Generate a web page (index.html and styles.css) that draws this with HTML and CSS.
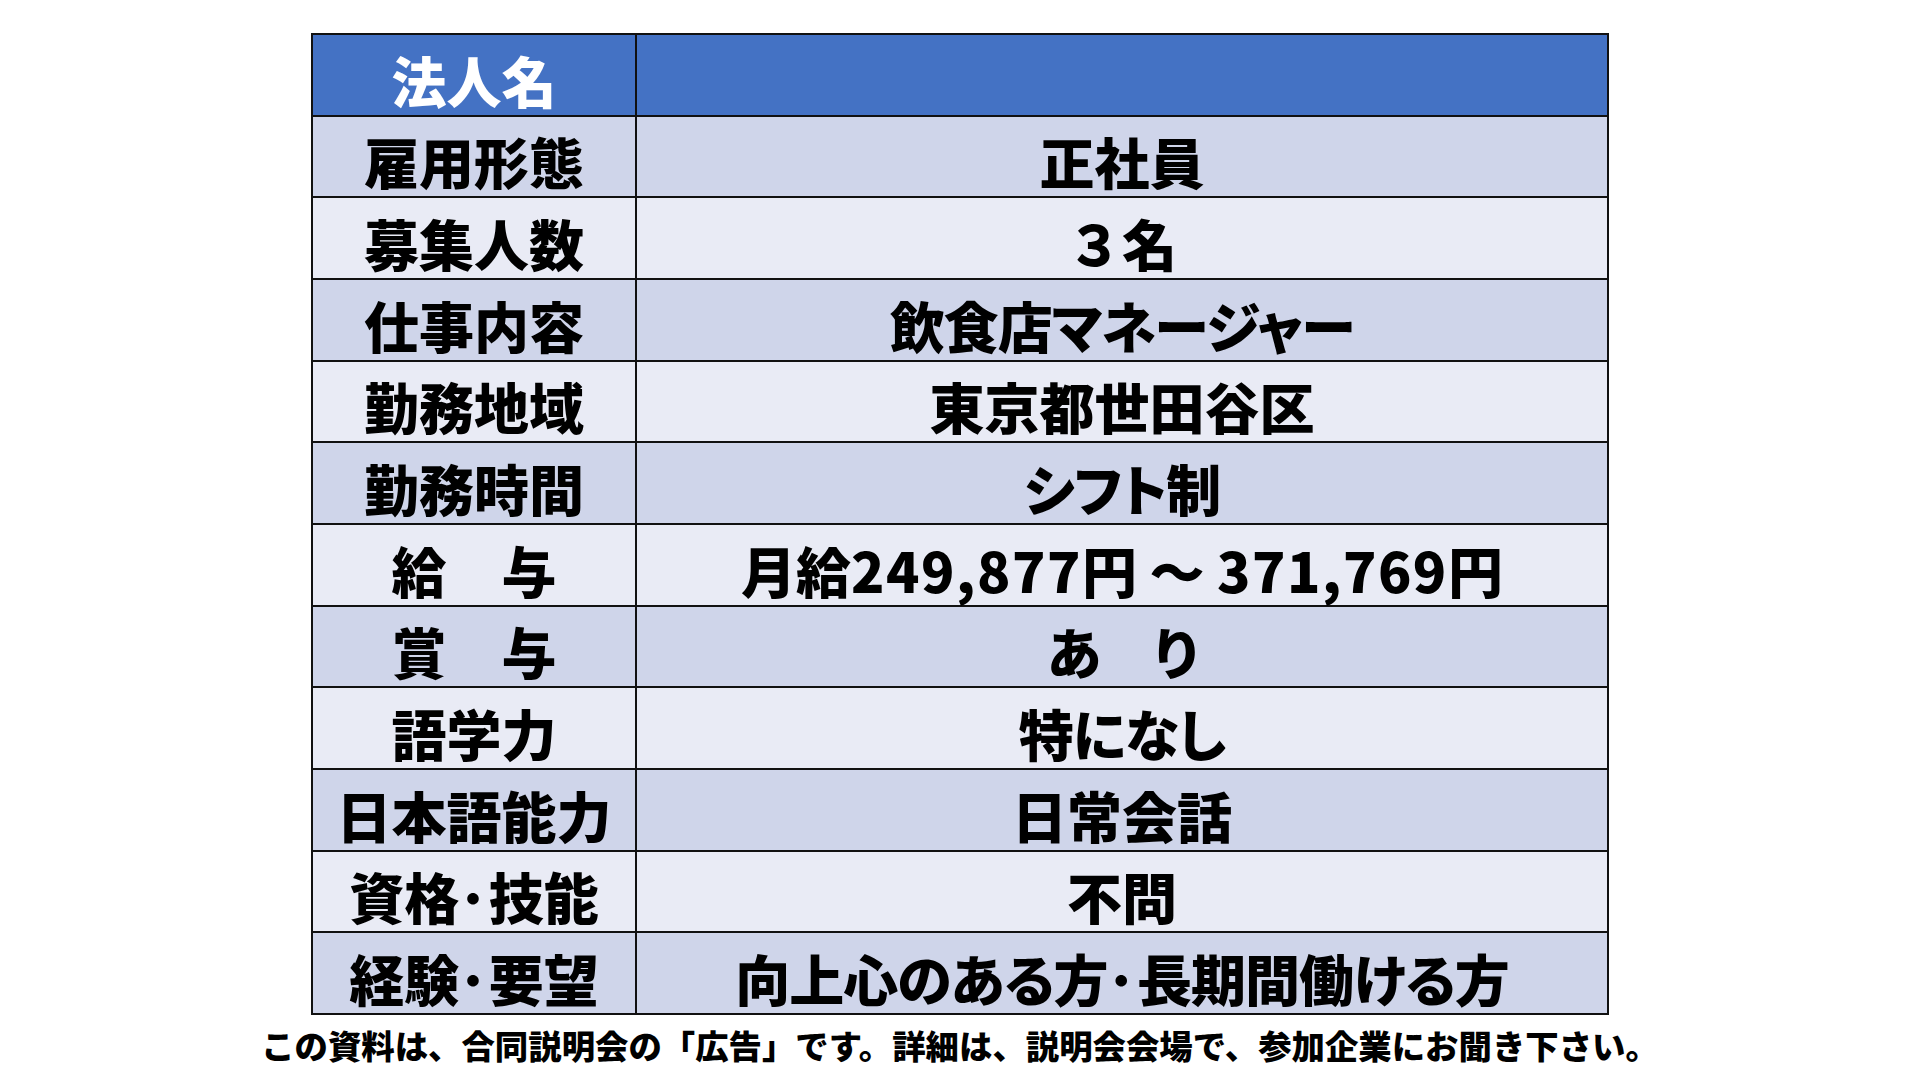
FILE: index.html
```html
<!DOCTYPE html>
<html lang="ja">
<head>
<meta charset="utf-8">
<title>求人情報</title>
<link rel="stylesheet" href="styles.css">
</head>
<body>
<main class="page">
  <table class="job">
    <tr class="head"><td class="label">法人名</td><td class="value"></td></tr>
    <tr class="dark"><td class="label">雇用形態</td><td class="value">正社員</td></tr>
    <tr class="light"><td class="label">募集人数</td><td class="value">３名</td></tr>
    <tr class="dark"><td class="label">仕事内容</td><td class="value prop">飲食店マネージャー</td></tr>
    <tr class="light"><td class="label">勤務地域</td><td class="value">東京都世田谷区</td></tr>
    <tr class="dark"><td class="label">勤務時間</td><td class="value prop">シフト制</td></tr>
    <tr class="light"><td class="label">給　与</td><td class="value">月給<span class="num">249,877</span>円 ～ <span class="num">371,769</span>円</td></tr>
    <tr class="dark"><td class="label">賞　与</td><td class="value prop">あ　り</td></tr>
    <tr class="light"><td class="label">語学力</td><td class="value prop">特になし</td></tr>
    <tr class="dark"><td class="label">日本語能力</td><td class="value">日常会話</td></tr>
    <tr class="light"><td class="label">資格<span class="dot">･</span>技能</td><td class="value">不問</td></tr>
    <tr class="dark"><td class="label">経験<span class="dot">･</span>要望</td><td class="value prop">向上心のある方<span class="dot">･</span>長期間働ける方</td></tr>
  </table>
  <p class="note">この資料は、合同説明会の「広告」です。詳細は、説明会会場で、参加企業にお聞き下さい。</p>
</main>
</body>
</html>
```
FILE: styles.css
```css
html, body {
  margin: 0;
  padding: 0;
  background: #ffffff;
}

body {
  width: 1920px;
  height: 1080px;
  overflow: hidden;
  font-family: "Noto Sans CJK JP", "Noto Sans", sans-serif;
  color: #000000;
}

.page {
  display: flex;
  flex-direction: column;
  align-items: center;
  padding-top: 33px;
}

.job {
  border-collapse: collapse;
  width: 1298px;
  table-layout: fixed;
}

.job td {
  border: 2px solid #111111;
  height: 81.67px;
  padding: 8px 0 0 0;
  box-sizing: border-box;
  text-align: center;
  vertical-align: middle;
  font-size: 55px;
  font-weight: 900;
  line-height: 60px;
  white-space: nowrap;
}

.job .label {
  width: 324px;
}

.job .prop {
  font-feature-settings: "palt";
  letter-spacing: -1px;
}

.job .head td {
  background: #4472c4;
  color: #ffffff;
}

.job .dark td {
  background: #cfd5ea;
}

.job .light td {
  background: #e9ebf5;
}

.num {
  letter-spacing: 1.5px;
}

.dot {
  letter-spacing: 2px;
  font-feature-settings: normal;
}

.note {
  margin: 10px 0 0 0;
  font-size: 33.4px;
  font-weight: 900;
  line-height: 40px;
  text-align: center;
  white-space: nowrap;
}
```
